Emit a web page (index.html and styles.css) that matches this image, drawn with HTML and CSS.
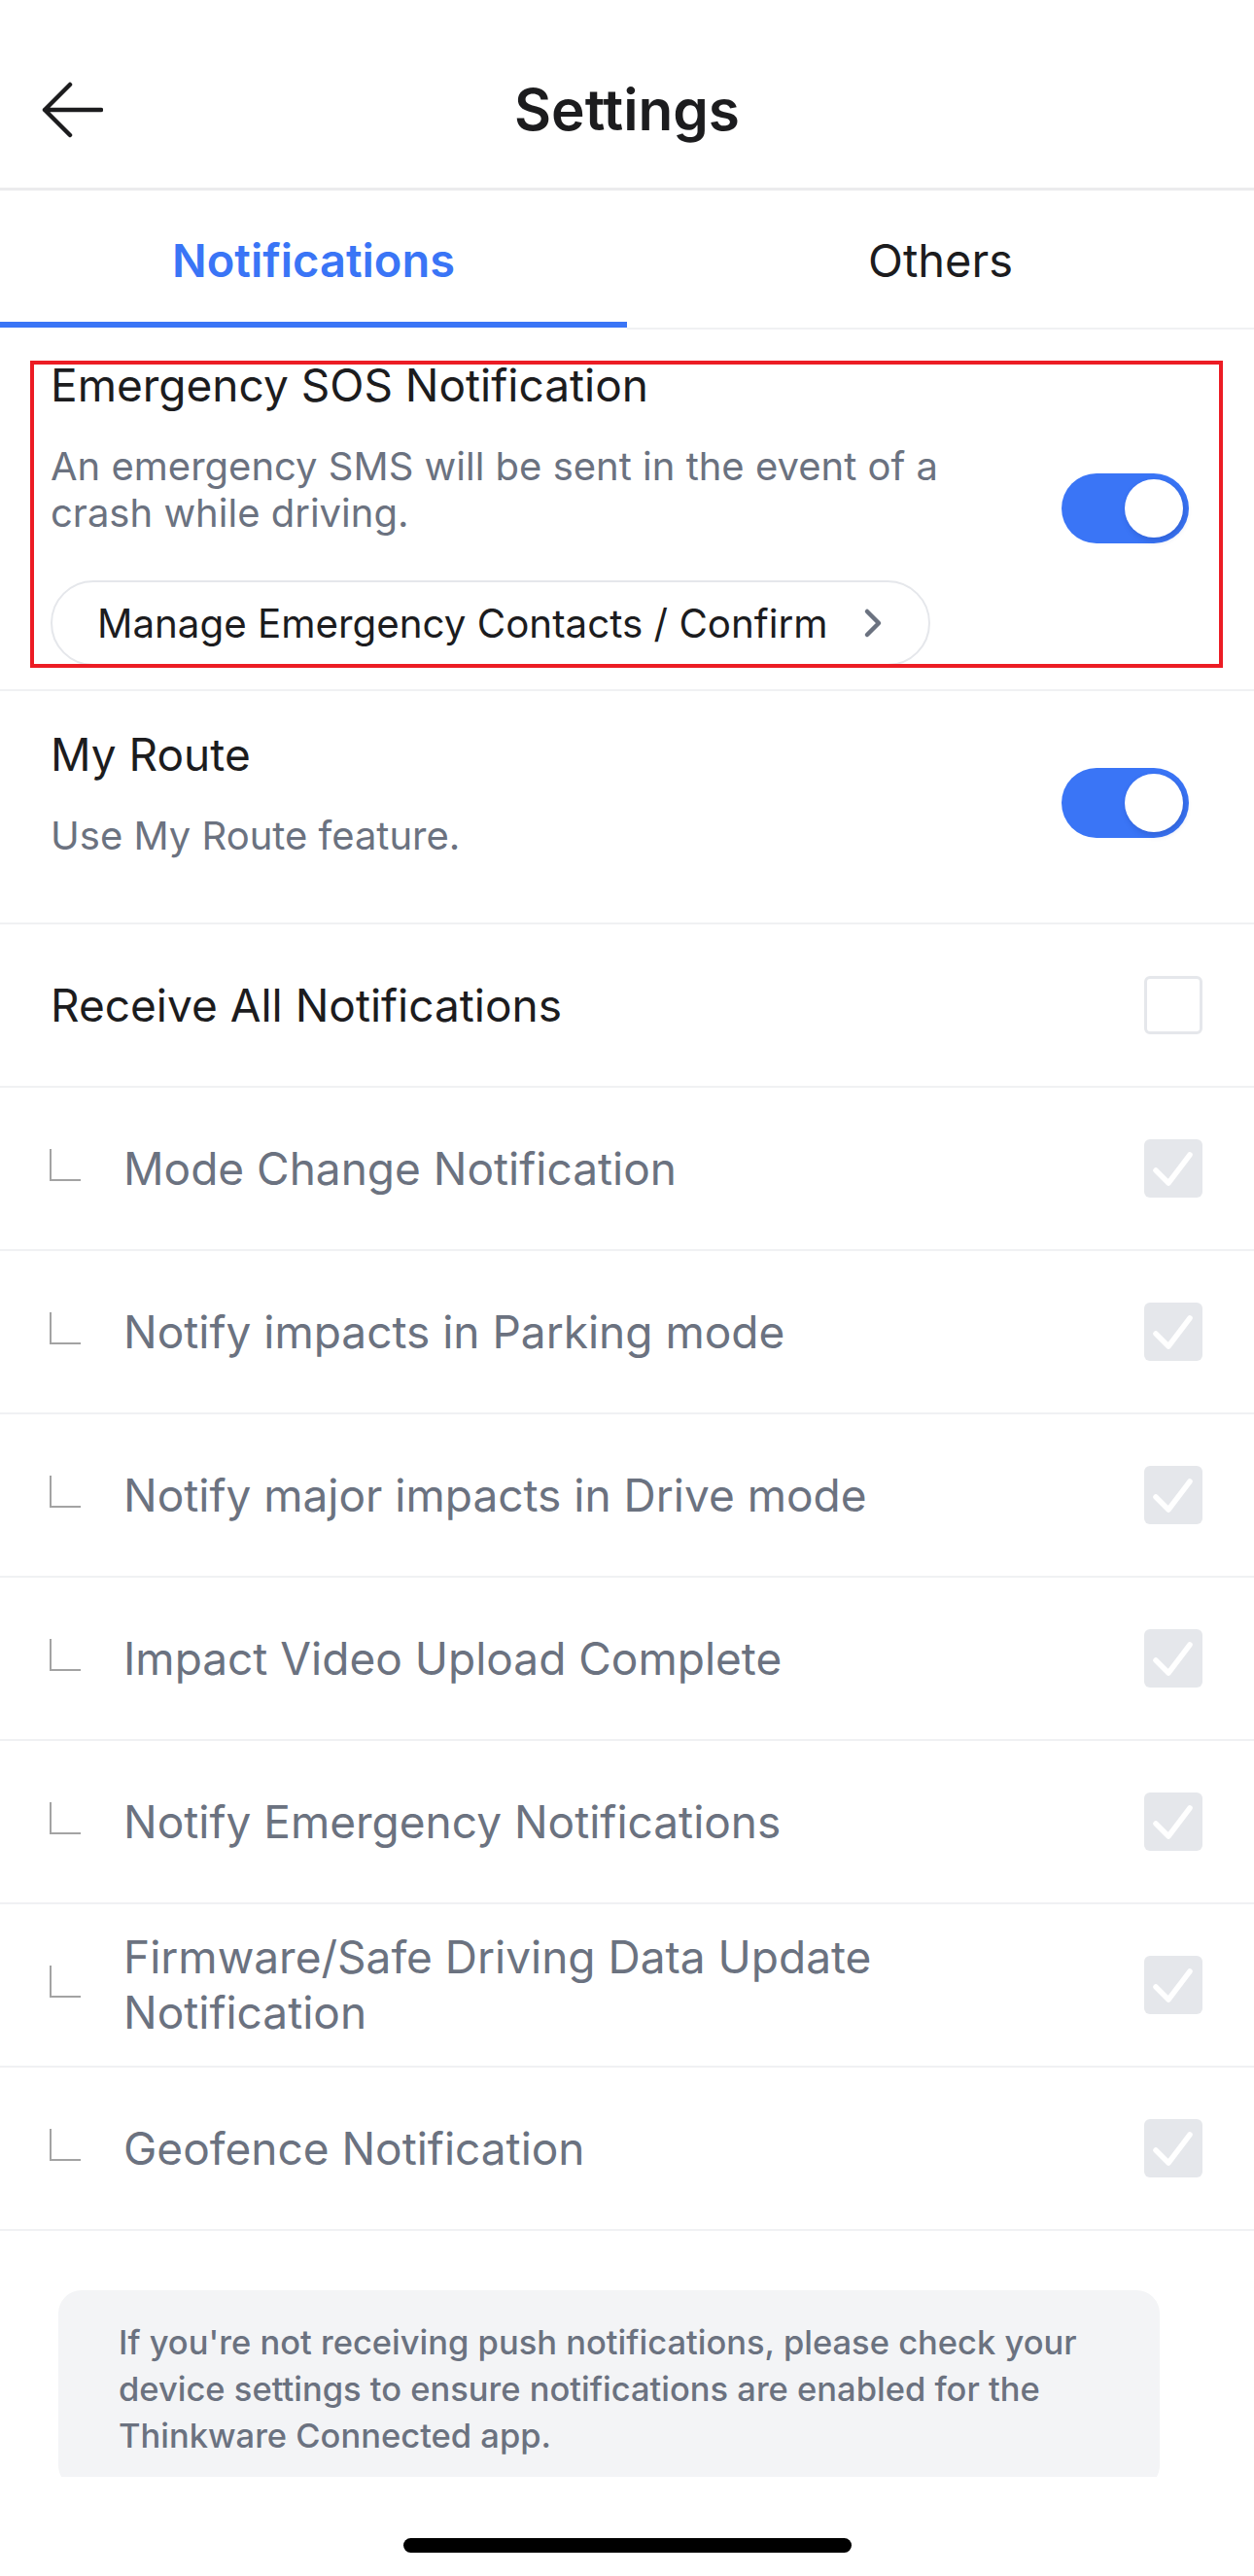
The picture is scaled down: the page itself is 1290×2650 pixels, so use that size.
FILE: index.html
```html
<!DOCTYPE html>
<html lang="en">
<head>
<meta charset="utf-8">
<title>Settings</title>
<link rel="stylesheet" href="styles.css">
</head>
<body>
<div class="screen">
  <header class="topbar">
    <div class="topbar-side">
      <svg class="back-icon" width="64" height="58" viewBox="0 0 64 58" aria-hidden="true">
        <path d="M62 29 H4 M30 3 L4 29 L30 55" fill="none" stroke="#1c1c1e" stroke-width="4.5" stroke-linecap="round" stroke-linejoin="round"/>
      </svg>
    </div>
    <h1 class="topbar-title">Settings</h1>
    <div class="topbar-side"></div>
  </header>

  <nav class="tabs">
    <div class="tab tab-active">Notifications</div>
    <div class="tab">Others</div>
  </nav>

  <main class="content">
    <section class="row row-sos">
      <div class="row-text">
        <div class="row-title">Emergency SOS Notification</div>
        <p class="row-desc">An emergency SMS will be sent in the event of a crash while driving.</p>
        <button class="pill-btn" type="button">
          <span>Manage Emergency Contacts / Confirm</span>
          <svg class="chevron" width="22" height="32" viewBox="0 0 22 32" aria-hidden="true">
            <polyline points="5,4 17,16 5,28" fill="none" stroke="#6b7280" stroke-width="4.5" stroke-linecap="round" stroke-linejoin="round"/>
          </svg>
        </button>
      </div>
      <span class="toggle"><span class="knob"></span></span>
      <div class="highlight"></div>
    </section>

    <section class="row row-route">
      <div class="row-text row-text-route">
        <div class="row-title">My Route</div>
        <p class="row-desc">Use My Route feature.</p>
      </div>
      <span class="toggle"><span class="knob"></span></span>
    </section>

    <section class="row row-check">
      <div class="check-label">Receive All Notifications</div>
      <span class="checkbox"></span>
    </section>

    <section class="row row-check">
      <span class="sub-marker"></span>
      <div class="check-label sub-label">Mode Change Notification</div>
      <span class="checkbox checkbox-on"><svg width="60" height="60" viewBox="0 0 60 60" aria-hidden="true"><polyline points="12,32 25,45 47,16" fill="none" stroke="#fff" stroke-width="5.5" stroke-linecap="round" stroke-linejoin="round"/></svg></span>
    </section>

    <section class="row row-check">
      <span class="sub-marker"></span>
      <div class="check-label sub-label">Notify impacts in Parking mode</div>
      <span class="checkbox checkbox-on"><svg width="60" height="60" viewBox="0 0 60 60" aria-hidden="true"><polyline points="12,32 25,45 47,16" fill="none" stroke="#fff" stroke-width="5.5" stroke-linecap="round" stroke-linejoin="round"/></svg></span>
    </section>

    <section class="row row-check">
      <span class="sub-marker"></span>
      <div class="check-label sub-label">Notify major impacts in Drive mode</div>
      <span class="checkbox checkbox-on"><svg width="60" height="60" viewBox="0 0 60 60" aria-hidden="true"><polyline points="12,32 25,45 47,16" fill="none" stroke="#fff" stroke-width="5.5" stroke-linecap="round" stroke-linejoin="round"/></svg></span>
    </section>

    <section class="row row-check">
      <span class="sub-marker"></span>
      <div class="check-label sub-label">Impact Video Upload Complete</div>
      <span class="checkbox checkbox-on"><svg width="60" height="60" viewBox="0 0 60 60" aria-hidden="true"><polyline points="12,32 25,45 47,16" fill="none" stroke="#fff" stroke-width="5.5" stroke-linecap="round" stroke-linejoin="round"/></svg></span>
    </section>

    <section class="row row-check">
      <span class="sub-marker"></span>
      <div class="check-label sub-label">Notify Emergency Notifications</div>
      <span class="checkbox checkbox-on"><svg width="60" height="60" viewBox="0 0 60 60" aria-hidden="true"><polyline points="12,32 25,45 47,16" fill="none" stroke="#fff" stroke-width="5.5" stroke-linecap="round" stroke-linejoin="round"/></svg></span>
    </section>

    <section class="row row-check">
      <span class="sub-marker"></span>
      <div class="check-label sub-label">Firmware/Safe Driving Data Update Notification</div>
      <span class="checkbox checkbox-on"><svg width="60" height="60" viewBox="0 0 60 60" aria-hidden="true"><polyline points="12,32 25,45 47,16" fill="none" stroke="#fff" stroke-width="5.5" stroke-linecap="round" stroke-linejoin="round"/></svg></span>
    </section>

    <section class="row row-check">
      <span class="sub-marker"></span>
      <div class="check-label sub-label">Geofence Notification</div>
      <span class="checkbox checkbox-on"><svg width="60" height="60" viewBox="0 0 60 60" aria-hidden="true"><polyline points="12,32 25,45 47,16" fill="none" stroke="#fff" stroke-width="5.5" stroke-linecap="round" stroke-linejoin="round"/></svg></span>
    </section>

    <div class="info-box">If you're not receiving push notifications, please check your device settings to ensure notifications are enabled for the Thinkware Connected app.</div>
  </main>

  <footer class="home-area"><span class="home-indicator"></span></footer>
</div>
</body>
</html>
```

FILE: styles.css
```css
html, body {
  margin: 0;
  padding: 0;
  background: #ffffff;
}

body {
  font-family: Inter, "Noto Sans", "Liberation Sans", sans-serif;
  color: #1c1c1e;
}

.screen {
  width: 1290px;
  height: 2650px;
  overflow: hidden;
  display: flex;
  flex-direction: column;
}

/* Header */
.topbar {
  box-sizing: border-box;
  height: 196px;
  flex-shrink: 0;
  padding-top: 33px;
  border-bottom: 3px solid #ebebed;
  display: grid;
  grid-template-columns: 1fr auto 1fr;
  align-items: center;
}

.topbar-side {
  display: flex;
  align-items: center;
  padding-left: 42px;
}

.back-icon {
  display: block;
}

.topbar-title {
  margin: 0;
  font-size: 58.5px;
  font-weight: 600;
  line-height: 58px;
  color: #1c1c1e;
}

/* Tabs */
.tabs {
  display: flex;
  align-items: flex-start;
  height: 143px;
  flex-shrink: 0;
}

.tab {
  flex: 1;
  box-sizing: border-box;
  height: 143px;
  padding-top: 43px;
  text-align: center;
  font-size: 47px;
  line-height: 58px;
  font-weight: 400;
  color: #1c1c1e;
  border-bottom: 2px solid #f0f1f3;
}

.tab-active {
  height: 141px;
  font-weight: 600;
  color: #3a75f6;
  border-bottom: 6px solid #3a75f6;
}

/* Content */
.content {
  height: 2209px;
  flex-shrink: 0;
  overflow: hidden;
}

.row {
  box-sizing: border-box;
  display: flex;
  align-items: center;
  padding: 0 53px 0 52px;
  border-bottom: 2px solid #f0f1f3;
}

.row-sos {
  position: relative;
  height: 372px;
  padding-top: 30px;
  padding-bottom: 24px;
}

.row-route {
  height: 240px;
  padding-top: 38px;
  padding-bottom: 38px;
}

.row-text {
  flex: 1;
  min-width: 0;
}

.row-text-route {
  padding-bottom: 27px;
}

.row-title {
  font-size: 46px;
  line-height: 54px;
  color: #1c1c1e;
}

.row-desc {
  margin: 33px 0 0;
  max-width: 960px;
  font-size: 40px;
  line-height: 48px;
  color: #6b7280;
}

.pill-btn {
  margin-top: 45px;
  box-sizing: border-box;
  height: 88px;
  display: inline-flex;
  align-items: center;
  gap: 35px;
  padding: 0 46px;
  border: 2px solid #e5e7eb;
  border-radius: 44px;
  background: #ffffff;
  font-family: inherit;
  font-size: 40.3px;
  color: #1c1c1e;
}

.chevron {
  display: block;
  flex-shrink: 0;
}

.toggle {
  flex-shrink: 0;
  box-sizing: border-box;
  width: 131px;
  height: 72px;
  margin: 0 14px 8px 40px;
  padding: 0 6px;
  border-radius: 36px;
  background: #3a75f6;
  display: flex;
  align-items: center;
  justify-content: flex-end;
}

.knob {
  width: 60px;
  height: 60px;
  border-radius: 50%;
  background: #ffffff;
  box-shadow: 2px 3px 6px rgba(20, 40, 120, 0.25);
}

.highlight {
  position: absolute;
  left: 31px;
  top: 32px;
  width: 1227px;
  height: 316px;
  box-sizing: border-box;
  border: 4.5px solid #ec1c24;
  pointer-events: none;
}

/* Checkbox rows */
.row-check {
  height: 168px;
}

.check-label {
  flex: 1;
  min-width: 0;
  font-size: 46px;
  line-height: 57px;
  color: #1c1c1e;
}

.sub-label {
  color: #6b7280;
  max-width: 960px;
  padding-right: 40px;
}

.sub-marker {
  flex-shrink: 0;
  box-sizing: border-box;
  width: 32px;
  height: 33px;
  margin: 0 44px 8px -1px;
  border-left: 2px solid #a3a3a3;
  border-bottom: 2px solid #a3a3a3;
}

.checkbox {
  flex-shrink: 0;
  box-sizing: border-box;
  width: 60px;
  height: 60px;
  margin-left: auto;
  border: 3px solid #e5e7eb;
  border-radius: 6px;
  background: #ffffff;
}

.checkbox-on {
  border: none;
  background: #e5e7eb;
}

.checkbox svg {
  display: block;
}

/* Info box */
.info-box {
  margin: 61px 97px 0 60px;
  padding: 30px 62px 30px;
  border-radius: 24px;
  background: #f3f4f6;
  font-size: 34.5px;
  font-weight: 500;
  line-height: 48px;
  color: #6b7280;
}

/* Home indicator */
.home-area {
  height: 102px;
  flex-shrink: 0;
  box-sizing: border-box;
  padding-top: 63px;
  display: flex;
  justify-content: center;
  align-items: flex-start;
}

.home-indicator {
  width: 461px;
  height: 15px;
  border-radius: 8px;
  background: #000000;
}
```
